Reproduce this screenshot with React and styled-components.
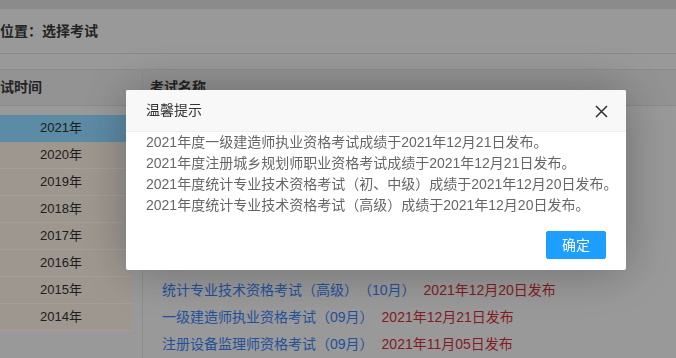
import React from 'react';
import styled, { createGlobalStyle } from 'styled-components';

const GlobalStyle = createGlobalStyle`
  html, body {
    margin: 0;
    padding: 0;
    overflow: hidden;
  }
  body {
    font-family: "Liberation Sans", "Noto Sans CJK SC", sans-serif;
    font-size: 14px;
    color: #333;
    text-spacing-trim: space-all;
  }
  * {
    box-sizing: border-box;
  }
`;

const years = ['2021', '2020', '2019', '2018', '2017', '2016', '2015', '2014'];

// the first rows sit behind the dialog
const exams = [
  { name: '一级建造师执业资格考试（10月）', date: '2021年12月21日发布' },
  { name: '注册城乡规划师职业资格考试（10月）', date: '2021年12月21日发布' },
  { name: '统计专业技术资格考试（初、中级）（10月）', date: '2021年12月20日发布' },
  { name: '二级建造师执业资格考试（10月）', date: '2021年12月10日发布' },
  { name: '注册安全工程师职业资格考试（10月）', date: '2021年12月08日发布' },
  { name: '中级经济专业技术资格考试（11月）', date: '2021年12月01日发布' },
  { name: '统计专业技术资格考试（高级）（10月）', date: '2021年12月20日发布' },
  { name: '一级建造师执业资格考试（09月）', date: '2021年12月21日发布' },
  { name: '注册设备监理师资格考试（09月）', date: '2021年11月05日发布' },
  { name: '翻译专业资格（水平）口译考试（06月）', date: '2021年08月13日发布' },
];

const notices = [
  '2021年度一级建造师执业资格考试成绩于2021年12月21日发布。',
  '2021年度注册城乡规划师职业资格考试成绩于2021年12月21日发布。',
  '2021年度统计专业技术资格考试（初、中级）成绩于2021年12月20日发布。',
  '2021年度统计专业技术资格考试（高级）成绩于2021年12月20日发布。',
];

const Page = styled.div`
  width: 100%;
  height: 358px;
  background: #dcdcdc;
  overflow: hidden;
`;

const TopBar = styled.div`
  height: 9px;
  background: #c7c7c7;
`;

const Breadcrumb = styled.div`
  height: 45px;
  line-height: 44px;
  font-weight: bold;
  color: #333;
  border-bottom: 1px solid #c5c5c5;
`;

const Band = styled.div`
  height: 16px;
  border-bottom: 1px solid #c8c8c8;
`;

const Table = styled.div`
  display: grid;
  grid-template-columns: 143px 1fr;
`;

const HeadCell = styled.div`
  height: 36px;
  line-height: 35px;
  padding-left: ${(p) => p.$indent || 0}px;
  font-weight: bold;
  color: #333;
  background: #d3d3d3;
  border-bottom: 1px solid #c6c6c6;
  border-right: ${(p) => (p.$divider ? '1px solid #cacaca' : 'none')};
`;

const YearColumn = styled.div`
  padding: 9px 10px 0 0;
  height: 300px;
  border-right: 1px solid #cacaca;
`;

const YearRow = styled.div`
  height: 27px;
  line-height: 26px;
  padding-left: 40px;
  font-size: 13px;
  color: #2b2b2b;
  background: ${(p) => (p.$active ? '#85c7ec' : '#e2d9cf')};
  border-bottom: 1px solid ${(p) => (p.$active ? '#85c7ec' : '#ebe4dc')};
`;

const ExamColumn = styled.div`
  padding: 9px 0 0 19px;
`;

const ExamRow = styled.div`
  height: 27px;
  line-height: 27px;
  white-space: nowrap;
`;

const ExamLink = styled.a`
  color: #3274dc;
  text-decoration: none;
`;

const ExamDate = styled.span`
  margin-left: 8px;
  color: #bb2a30;
`;

const Shade = styled.div`
  position: fixed;
  inset: 0;
  background: rgba(0, 0, 0, 0.3);
`;

const Dialog = styled.div`
  position: fixed;
  left: 126px;
  top: 90px;
  width: 500px;
  background: #fff;
  border-radius: 2px;
  box-shadow: 1px 1px 50px rgba(0, 0, 0, 0.3);
`;

const DialogTitle = styled.div`
  height: 42px;
  line-height: 41px;
  padding: 0 80px 0 20px;
  background: #f8f8f8;
  border-bottom: 1px solid #eee;
  border-radius: 2px 2px 0 0;
  color: #333;
`;

const CloseButton = styled.span`
  position: absolute;
  right: 18px;
  top: 15px;
  width: 13px;
  height: 13px;
  display: flex;
  cursor: pointer;
`;

const DialogBody = styled.div`
  padding: 0 20px 10px;
  line-height: 21px;
  color: #666;
  white-space: nowrap;
`;

const DialogFooter = styled.div`
  padding: 0 15px 11px;
  display: flex;
  justify-content: flex-end;
`;

const ConfirmButton = styled.button`
  height: 28px;
  margin: 5px 5px 0;
  padding: 0 15px;
  border: 1px solid #1e9fff;
  border-radius: 2px;
  background: #1e9fff;
  color: #fff;
  font-family: inherit;
  font-size: 14px;
  line-height: 26px;
  cursor: pointer;
`;

const App = () => {
  return (
    <>
      <GlobalStyle />
      <Page>
        <TopBar />
        <Breadcrumb>位置：选择考试</Breadcrumb>
        <Band />
        <Table>
          <HeadCell $divider>试时间</HeadCell>
          <HeadCell $indent={7}>考试名称</HeadCell>
          <YearColumn>
            {years.map((y, i) => (
              <YearRow key={y} $active={i === 0}>{y}年</YearRow>
            ))}
          </YearColumn>
          <ExamColumn>
            {exams.map((e) => (
              <ExamRow key={e.name}>
                <ExamLink href="#">{e.name}</ExamLink>
                <ExamDate>{e.date}</ExamDate>
              </ExamRow>
            ))}
          </ExamColumn>
        </Table>
      </Page>
      <Shade />
      <Dialog>
        <DialogTitle>温馨提示</DialogTitle>
        <CloseButton>
          <svg width="13" height="13" viewBox="0 0 13 13">
            <path d="M1 1 L12 12 M12 1 L1 12" stroke="#2e2e2e" strokeWidth="1.5" fill="none" />
          </svg>
        </CloseButton>
        <DialogBody>
          {notices.map((n) => (
            <div key={n}>{n}</div>
          ))}
        </DialogBody>
        <DialogFooter>
          <ConfirmButton>确定</ConfirmButton>
        </DialogFooter>
      </Dialog>
    </>
  );
};

export default App;
